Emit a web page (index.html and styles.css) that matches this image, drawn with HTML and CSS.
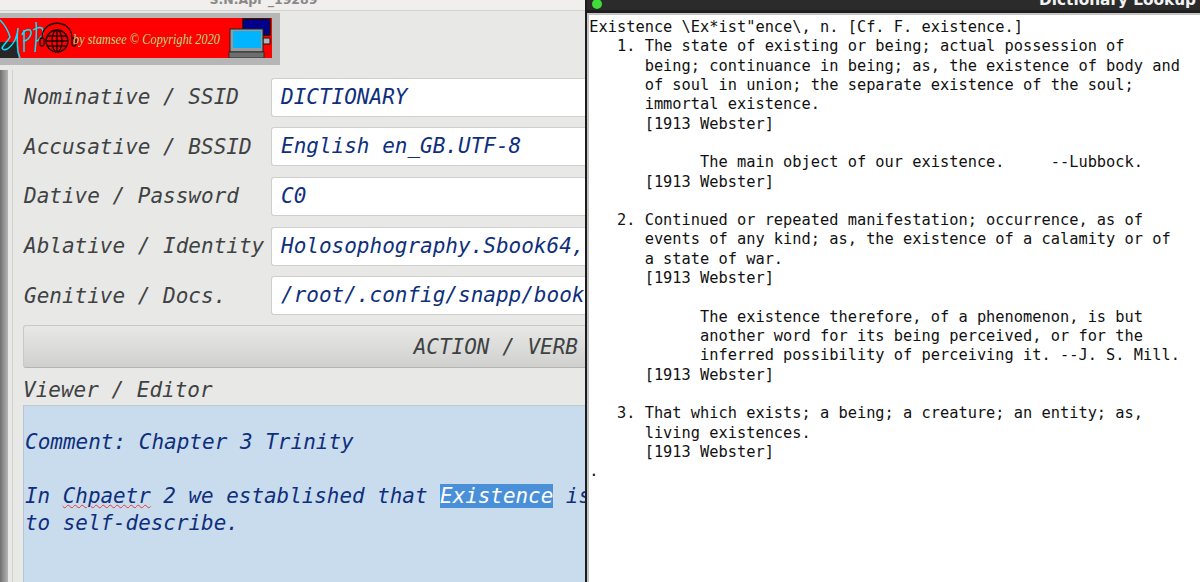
FILE: index.html
```html
<!DOCTYPE html>
<html lang="en">
<head>
    <meta charset="UTF-8">
    <title>Dictionary Lookup</title>
    <link rel="stylesheet" href="styles.css">
</head>
<body>
    <div class="desktop">
        <section class="app">
            <div class="app-title"><span>S.N.Apr _19289</span></div>
            <div class="banner">
                <svg class="banner-art" width="272" height="40" viewBox="0 0 272 40">
                    <rect width="272" height="40" fill="#ff0000"/>
                    <rect x="0" y="24" width="18" height="16" fill="#262626"/>
                    <!-- scribbled logo -->
                    <path d="M0 2C4 6 8 12 10 19C8 23 4 26 2 30C4 34 10 31 15 22C17 17 18 13 18 10C17 16 17 24 18 34L20 40M24 12V34M22 17C23 13 27 11 30 12C32 14 31 18 28 21C27 22 25 23 23 23M36 4C37 14 36 24 35 34M33 12C36 10 40 9 42 10C44 13 43 17 40 20C39 22 37 23 36 23" fill="none" stroke="#00eaff" stroke-width="1.5"/>
                    <!-- globe with headset -->
                    <g fill="none" stroke="#1c0000" stroke-width="1.3">
                        <circle cx="57" cy="23" r="11"/>
                        <ellipse cx="57" cy="23" rx="5" ry="11"/>
                        <path d="M57 12V34M47 18H67M46 23H68M47 28H67"/>
                        <path d="M42 21C41 0 73 0 72 21"/>
                        <rect x="40" y="20" width="4" height="8" rx="1.5"/>
                        <rect x="72" y="20" width="4" height="8" rx="1.5"/>
                    </g>
                    <text class="banner-text" x="73" y="26" textLength="147" lengthAdjust="spacingAndGlyphs">by stamsee © Copyright 2020</text>
                    <!-- monitors -->
                    <rect x="243" y="1" width="27" height="16" fill="#00008b" stroke="#111" stroke-width="1.5"/>
                    <path d="M263 20H270V26H263Z" fill="#b5b5b5" stroke="#111"/>
                    <rect x="230" y="11" width="33" height="23" fill="#9a9a9a" stroke="#222"/>
                    <rect x="233" y="13" width="28" height="17" fill="#00b4ff"/>
                    <rect x="229" y="34" width="35" height="6" fill="#6e6e6e" stroke="#222" stroke-width="0.8"/>
                </svg>
            </div>
            <div class="app-body">
                <div class="rail"></div>
                <div class="panel">
                    <div class="field">
                        <label>Nominative / SSID</label>
                        <div class="value">DICTIONARY</div>
                    </div>
                    <div class="field">
                        <label>Accusative / BSSID</label>
                        <div class="value">English en_GB.UTF-8</div>
                    </div>
                    <div class="field">
                        <label>Dative / Password</label>
                        <div class="value">C0</div>
                    </div>
                    <div class="field">
                        <label>Ablative / Identity</label>
                        <div class="value">Holosophography.Sbook64,</div>
                    </div>
                    <div class="field">
                        <label>Genitive / Docs.</label>
                        <div class="value">/root/.config/snapp/book</div>
                    </div>
                    <button class="action" type="button">ACTION / VERB</button>
                    <div class="viewer-label">Viewer / Editor</div>
                    <div class="editor">
                        <p>Comment: Chapter 3 Trinity</p>
                        <p class="para">In <span class="typo">Chpaetr</span> 2 we established that <span class="selected">Existence</span> is<br>to self-describe.</p>
                    </div>
                </div>
            </div>
        </section>
        <section class="lookup">
            <div class="lookup-title">
                <span class="dot"></span>
                <span class="lookup-name">Dictionary Lookup</span>
            </div>
<pre class="definition">Existence \Ex*ist"ence\, n. [Cf. F. existence.]
   1. The state of existing or being; actual possession of
      being; continuance in being; as, the existence of body and
      of soul in union; the separate existence of the soul;
      immortal existence.
      [1913 Webster]

            The main object of our existence.     --Lubbock.
      [1913 Webster]

   2. Continued or repeated manifestation; occurrence, as of
      events of any kind; as, the existence of a calamity or of
      a state of war.
      [1913 Webster]

            The existence therefore, of a phenomenon, is but
            another word for its being perceived, or for the
            inferred possibility of perceiving it. --J. S. Mill.
      [1913 Webster]

   3. That which exists; a being; a creature; an entity; as,
      living existences.
      [1913 Webster]
.</pre>
        </section>
    </div>
</body>
</html>
```

FILE: styles.css
```css
html, body {
    margin: 0;
    padding: 0;
    height: 100%;
    overflow: hidden;
}
.desktop {
    display: flex;
    width: 1200px;
    height: 582px;
    overflow: hidden;
    font-family: "DejaVu Sans Mono", monospace;
}

/* left window */
.app {
    width: 585px;
    flex-shrink: 0;
    background-color: #e8e8e7;
    overflow: hidden;
    display: flex;
    flex-direction: column;
}
.app-title {
    height: 10px;
    flex-shrink: 0;
    padding-right: 58px;
    background-color: #f0efee;
    border-bottom: 1px solid #d4d2cd;
    display: flex;
    justify-content: center;
    align-items: flex-end;
    overflow: hidden;
    color: #888;
    font-family: "DejaVu Sans", sans-serif;
    font-size: 12.5px;
    font-weight: bold;
    line-height: 20px;
}
.banner {
    align-self: flex-start;
    margin-top: 2px;
    padding: 5px 8px 7px 0;
    background-color: #b6b6b6;
    display: flex;
}
.banner-art {
    display: block;
}
.banner-text {
    fill: #b4dc84;
    font-family: "Liberation Serif", serif;
    font-size: 15px;
    font-style: italic;
}
.app-body {
    flex: 1;
    display: flex;
    margin-top: 5px;
    min-height: 0;
}
.rail {
    width: 12px;
    flex-shrink: 0;
    border-right: 1px solid #d0d0cf;
    background: linear-gradient(to right, #6f6f6f, #8c8c8c 3px, #b4b4b4 8px, #e8e8e7 8px);
}
.panel {
    flex: 1;
    min-width: 0;
    padding: 7.5px 0 0 10px;
    display: flex;
    flex-direction: column;
    font-size: 21px;
    font-style: oblique;
    color: #3f4242;
}
.field {
    display: flex;
    align-items: center;
    height: 39px;
    margin-bottom: 10.7px;
    flex-shrink: 0;
}
.field label {
    width: 247px;
    padding-left: 1px;
    flex-shrink: 0;
    white-space: nowrap;
}
.value {
    flex: 1;
    min-width: 0;
    height: 37px;
    line-height: 37px;
    padding-left: 9px;
    background-color: #fff;
    border: 1px solid #cfcfcd;
    border-right: none;
    border-radius: 3px 0 0 3px;
    color: #0f2f7c;
    white-space: nowrap;
    overflow: hidden;
}
.action {
    flex-shrink: 0;
    height: 43px;
    padding: 2px 7px 0 0;
    margin: -1px 0 0;
    text-align: right;
    border: 1px solid #c9c9c7;
    border-bottom-color: #b4b4b2;
    border-right: none;
    border-radius: 3px 0 0 3px;
    background: linear-gradient(to bottom, #e8e8e7, #d0d0ce);
    color: #3f4242;
    font: inherit;
}
.viewer-label {
    flex-shrink: 0;
    height: 37px;
    line-height: 44px;
    white-space: nowrap;
}
.editor {
    flex: 1;
    min-height: 0;
    padding: 23px 0 0 1px;
    background-color: #c9dcee;
    border-top: 1px solid #bcc8d2;
    border-left: 1px solid #b5c5d5;
    color: #0f2f7c;
    line-height: 27px;
    white-space: nowrap;
    overflow: hidden;
}
.editor p {
    margin: 0;
}
.editor .para {
    margin-top: 27px;
    font-size: 20.9px;
}
.typo {
    text-decoration: underline wavy #e8383b 1px;
    text-underline-offset: 1px;
}
.selected {
    background-color: #4a90d9;
    color: #fff;
}

/* right window */
.lookup {
    flex: 1;
    min-width: 0;
    background-color: #fff;
    border-left: 2px solid #1c1c1c;
    display: flex;
    flex-direction: column;
}
.lookup-title {
    height: 10px;
    flex-shrink: 0;
    background-color: #2b2b2b;
    border-bottom: 3px solid #1f1f1f;
    display: flex;
    justify-content: space-between;
    align-items: flex-end;
    overflow: hidden;
}
.dot {
    width: 10px;
    height: 10px;
    margin: 0 0 1px 5px;
    flex-shrink: 0;
    border-radius: 50%;
    background-color: #3fdc3a;
}
.lookup-name {
    margin-right: 4px;
    color: #f2f2f2;
    font-family: "DejaVu Sans", sans-serif;
    font-size: 15.3px;
    font-weight: bold;
    line-height: 20px;
}
.definition {
    flex: 1;
    margin: 0;
    padding: 3px 0 0 0.3px;
    border-left: 2px solid #c4c4c4;
    border-top: 2px solid #c4c4c4;
    font-family: "DejaVu Sans Mono", monospace;
    font-size: 15.33px;
    line-height: 19.32px;
    color: #111;
}
```
